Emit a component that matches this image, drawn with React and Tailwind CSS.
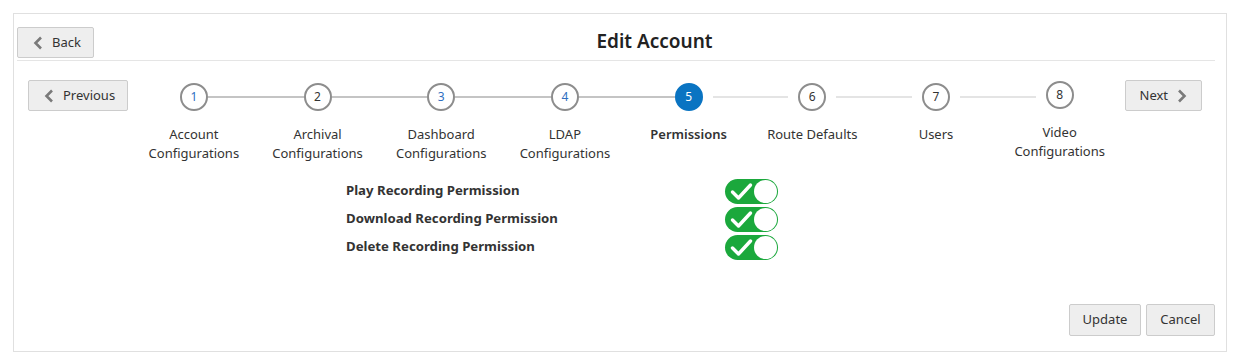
import React from 'react';

const steps = [
    { n: 1, label: ['Account', 'Configurations'], state: 'visited' },
    { n: 2, label: ['Archival', 'Configurations'], state: 'plain' },
    { n: 3, label: ['Dashboard', 'Configurations'], state: 'visited' },
    { n: 4, label: ['LDAP', 'Configurations'], state: 'visited' },
    { n: 5, label: ['Permissions'], state: 'active' },
    { n: 6, label: ['Route Defaults'], state: 'plain' },
    { n: 7, label: ['Users'], state: 'plain' },
    { n: 8, label: ['Video', 'Configurations'], state: 'plain' },
];

const permissions = [
    'Play Recording Permission',
    'Download Recording Permission',
    'Delete Recording Permission',
];

const ChevronLeft = () => (
    <svg width="10" height="14" viewBox="0 0 10 14" className="shrink-0">
        <polyline points="8,1.5 2.5,7 8,12.5" fill="none" stroke="#7a7a7a" strokeWidth="2.6" />
    </svg>
);

const ChevronRight = () => (
    <svg width="10" height="14" viewBox="0 0 10 14" className="shrink-0">
        <polyline points="2,1.5 7.5,7 2,12.5" fill="none" stroke="#7a7a7a" strokeWidth="2.6" />
    </svg>
);

const Toggle = () => (
    <div className="w-[53px] h-[25px] rounded-full bg-[#1ba83c] flex items-center justify-between pl-[5px] pr-[1px]">
        <svg width="23" height="19" viewBox="0 0 23 19">
            <polyline points="2.5,10 8.5,16 20.5,3" fill="none" stroke="#ffffff" strokeWidth="3.4" strokeLinecap="round" strokeLinejoin="round" />
        </svg>
        <div className="w-[23px] h-[23px] rounded-full bg-white"></div>
    </div>
);

const Step = ({ step, index }) => {
    const first = index === 0;
    const last = index === steps.length - 1;
    const leftDone = step.n <= 5;
    const rightDone = step.n < 5;
    const circle =
        step.state === 'active'
            ? 'bg-[#0a74c2] border-[#0a74c2] text-white'
            : step.state === 'visited'
            ? 'bg-white border-[#8d8d8d] text-[#2f6fbf]'
            : 'bg-white border-[#8d8d8d] text-[#333333]';

    return (
        <div className="w-[123.7px] flex flex-col items-center">
            <div className="w-full flex items-center mt-[3px]">
                <div className="flex-1 flex">
                    {!first && (
                        <div className={`h-[2px] flex-1 ${leftDone ? 'bg-[#c4c4c4]' : 'bg-[#e4e4e4] mr-[10px]'}`}></div>
                    )}
                </div>
                <div className={`w-[28px] h-[28px] rounded-full border-2 flex items-center justify-center text-[12px] leading-none ${circle} ${last ? '-translate-y-[2px]' : ''}`}>
                    {step.n}
                </div>
                <div className="flex-1 flex">
                    {!last && (
                        <div className={`h-[2px] flex-1 ${rightDone ? 'bg-[#c4c4c4]' : 'bg-[#e4e4e4] ml-[10px]'}`}></div>
                    )}
                </div>
            </div>
            <div className={`${last ? 'mt-[12px]' : 'mt-[14px]'} text-center text-[13px] leading-[19px] text-[#333333] ${step.state === 'active' ? 'font-semibold' : ''}`}>
                {step.label.map((l) => (
                    <div key={l}>{l}</div>
                ))}
            </div>
        </div>
    );
};

const App = () => {
    return (
        <div className="w-[1235px] h-[359px] bg-white pt-[13px] pl-[13px] font-['Noto_Sans',sans-serif] text-[#333333]">
            <div className="w-[1214px] h-[339px] border border-[#e0e0e0] pl-[3px] pr-[11px] pt-[13px] flex flex-col">

                {/* Header */}
                <div className="flex items-center border-b border-[#e5e5e5] pb-[2px]">
                    <button className="h-[31px] w-[77px] flex items-center gap-[9px] pl-[15px] bg-[#eeeeee] border border-[#cccccc] rounded-[2px] text-[13px] text-[#333333]">
                        <ChevronLeft />
                        Back
                    </button>
                    <h1 className="flex-1 text-center text-[19px] leading-[26px] -mt-[3px] font-semibold text-[#222222]">Edit Account</h1>
                </div>

                {/* Train */}
                <div className="flex items-start pl-[11px] pr-[11px] mt-[19px]">
                    <button className="h-[31px] w-[100px] flex items-center gap-[9px] pl-[15px] bg-[#eeeeee] border border-[#cccccc] rounded-[2px] text-[13px] text-[#333333] mr-[4px]">
                        <ChevronLeft />
                        Previous
                    </button>
                    {steps.map((s, i) => (
                        <Step key={s.n} step={s} index={i} />
                    ))}
                    <button className="h-[31px] w-[77px] flex items-center gap-[9px] pl-[14px] bg-[#eeeeee] border border-[#cccccc] rounded-[2px] text-[13px] text-[#333333] ml-[3px]">
                        Next
                        <ChevronRight />
                    </button>
                </div>

                {/* Permissions */}
                <div className="flex flex-col gap-[3px] pl-[329px] mt-[16px]">
                    {permissions.map((p) => (
                        <div key={p} className="flex items-center">
                            <div className="w-[379px] text-[13.2px] font-bold text-[#333333] -mt-[2px]">{p}</div>
                            <Toggle />
                        </div>
                    ))}
                </div>

                {/* Footer */}
                <div className="flex justify-end gap-[5px] mt-auto mb-[15px]">
                    <button className="h-[32px] w-[72px] bg-[#eeeeee] border border-[#cccccc] rounded-[2px] text-[13px] text-[#333333]">Update</button>
                    <button className="h-[32px] w-[69px] bg-[#eeeeee] border border-[#cccccc] rounded-[2px] text-[13px] text-[#333333]">Cancel</button>
                </div>
            </div>
        </div>
    );
};

export default App;
